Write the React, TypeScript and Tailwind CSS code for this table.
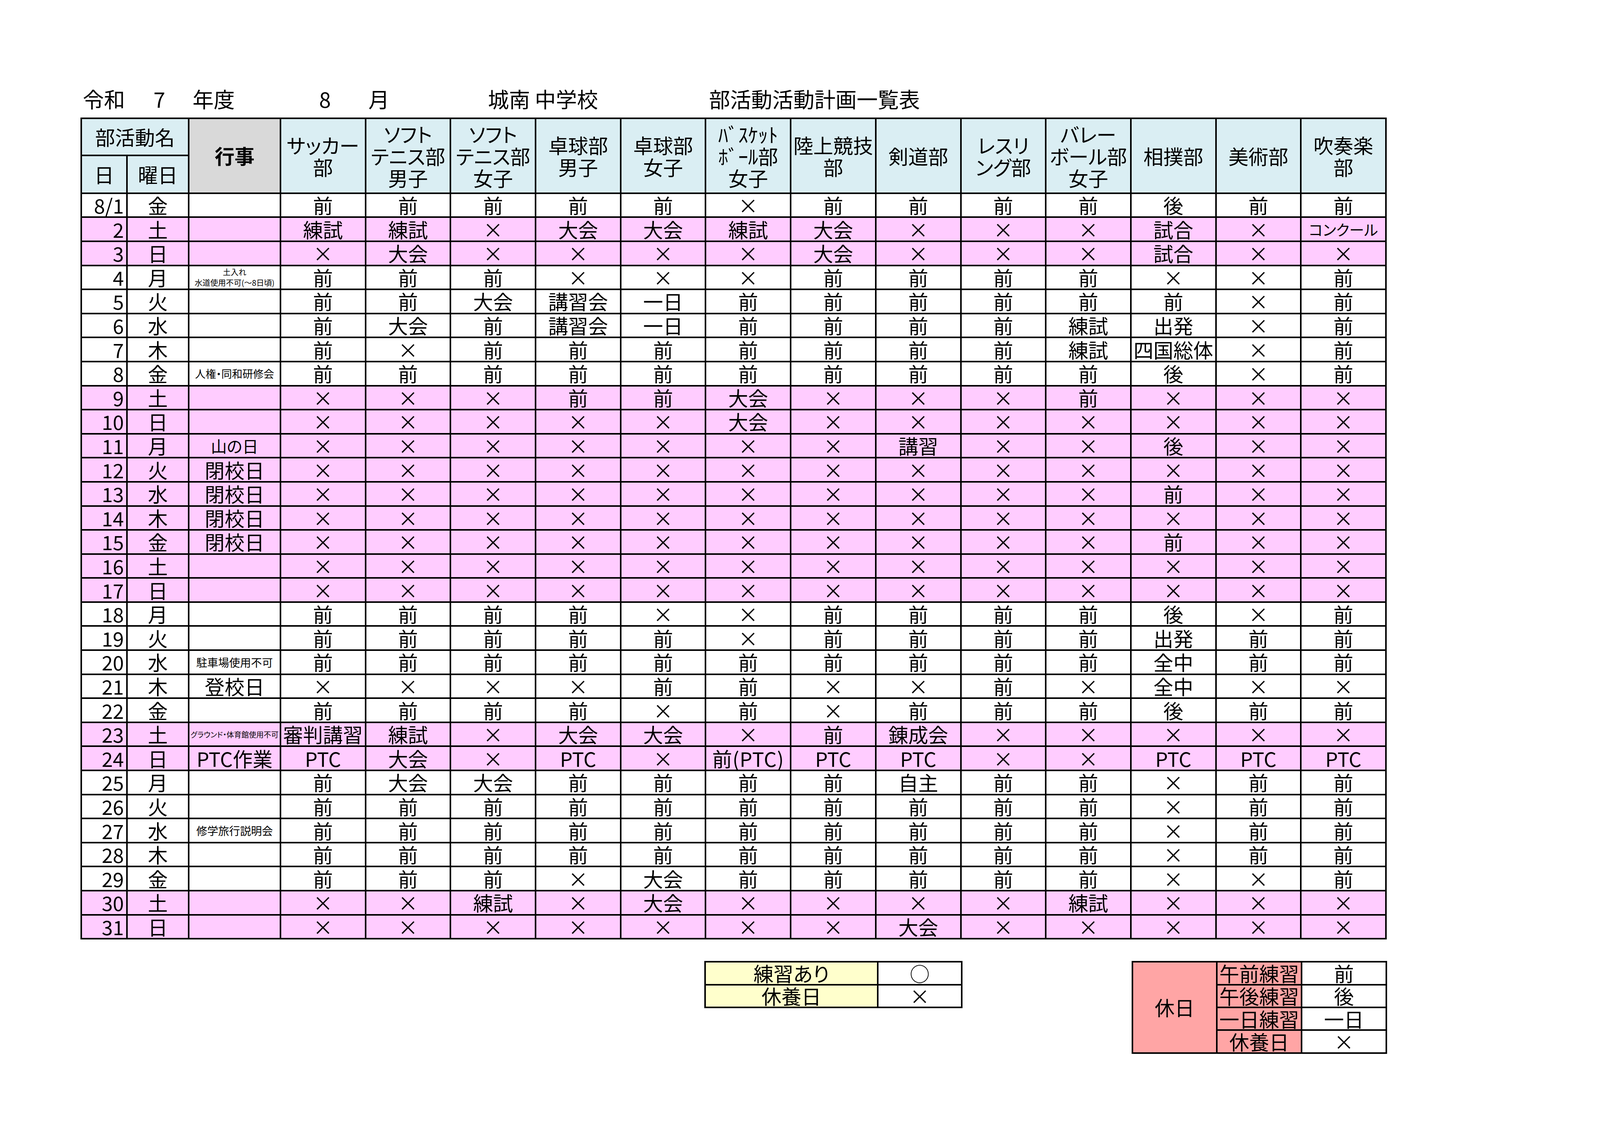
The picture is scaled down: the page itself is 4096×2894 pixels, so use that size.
import React from "react";

/*
  部活動活動計画一覧表 (8月)

  Spreadsheet-style monthly plan. The grid is drawn with a black background and
  4px gaps, so every cell line comes out the same weight.
*/

const clubs: string[][] = [
  ["サッカー", "部"],
  ["ソフト", "テニス部", "男子"],
  ["ソフト", "テニス部", "女子"],
  ["卓球部", "男子"],
  ["卓球部", "女子"],
  ["ﾊﾞｽｹｯﾄ", "ﾎﾞｰﾙ部", "女子"],
  ["陸上競技", "部"],
  ["剣道部"],
  ["レスリ", "ング部"],
  ["バレー", "ボール部", "女子"],
  ["相撲部"],
  ["美術部"],
  ["吹奏楽", "部"],
];

type Row = {
  d: string;
  w: string;
  pink?: boolean;
  ev?: React.ReactNode;
  v: string;
};

const ALL_X = "× × × × × × × × × × × × ×";
const ALL_MAE = "前 前 前 前 前 前 前 前 前 前 × 前 前";

const rows: Row[] = [
  { d: "8/1", w: "金", v: "前 前 前 前 前 × 前 前 前 前 後 前 前" },
  { d: "2", w: "土", pink: true, v: "練試 練試 × 大会 大会 練試 大会 × × × 試合 × コンクール" },
  { d: "3", w: "日", pink: true, v: "× 大会 × × × × 大会 × × × 試合 × ×" },
  {
    d: "4",
    w: "月",
    ev: (
      <div className="flex flex-col items-center text-[20px] leading-[27px]">
        <span>土入れ</span>
        <span>水道使用不可(～8日頃)</span>
      </div>
    ),
    v: "前 前 前 × × × 前 前 前 前 × × 前",
  },
  { d: "5", w: "火", v: "前 前 大会 講習会 一日 前 前 前 前 前 前 × 前" },
  { d: "6", w: "水", v: "前 大会 前 講習会 一日 前 前 前 前 練試 出発 × 前" },
  { d: "7", w: "木", v: "前 × 前 前 前 前 前 前 前 練試 四国総体 × 前" },
  {
    d: "8",
    w: "金",
    ev: <span className="text-[27px]">人権・同和研修会</span>,
    v: "前 前 前 前 前 前 前 前 前 前 後 × 前",
  },
  { d: "9", w: "土", pink: true, v: "× × × 前 前 大会 × × × 前 × × ×" },
  { d: "10", w: "日", pink: true, v: "× × × × × 大会 × × × × × × ×" },
  {
    d: "11",
    w: "月",
    pink: true,
    ev: <span className="text-[41px]">山の日</span>,
    v: "× × × × × × × 講習 × × 後 × ×",
  },
  { d: "12", w: "火", pink: true, ev: "閉校日", v: ALL_X },
  { d: "13", w: "水", pink: true, ev: "閉校日", v: "× × × × × × × × × × 前 × ×" },
  { d: "14", w: "木", pink: true, ev: "閉校日", v: ALL_X },
  { d: "15", w: "金", pink: true, ev: "閉校日", v: "× × × × × × × × × × 前 × ×" },
  { d: "16", w: "土", pink: true, v: ALL_X },
  { d: "17", w: "日", pink: true, v: ALL_X },
  { d: "18", w: "月", v: "前 前 前 前 × × 前 前 前 前 後 × 前" },
  { d: "19", w: "火", v: "前 前 前 前 前 × 前 前 前 前 出発 前 前" },
  {
    d: "20",
    w: "水",
    ev: <span className="text-[28px]">駐車場使用不可</span>,
    v: "前 前 前 前 前 前 前 前 前 前 全中 前 前",
  },
  { d: "21", w: "木", ev: "登校日", v: "× × × × 前 前 × × 前 × 全中 × ×" },
  { d: "22", w: "金", v: "前 前 前 前 × 前 × 前 前 前 後 前 前" },
  {
    d: "23",
    w: "土",
    pink: true,
    ev: <span className="text-[19px]">グラウンド・体育館使用不可</span>,
    v: "審判講習 練試 × 大会 大会 × 前 錬成会 × × × × ×",
  },
  {
    d: "24",
    w: "日",
    pink: true,
    ev: "PTC作業",
    v: "PTC 大会 × PTC × 前(PTC) PTC PTC × × PTC PTC PTC",
  },
  { d: "25", w: "月", v: "前 大会 大会 前 前 前 前 自主 前 前 × 前 前" },
  { d: "26", w: "火", v: ALL_MAE },
  {
    d: "27",
    w: "水",
    ev: <span className="text-[28px]">修学旅行説明会</span>,
    v: ALL_MAE,
  },
  { d: "28", w: "木", v: ALL_MAE },
  { d: "29", w: "金", v: "前 前 前 × 大会 前 前 前 前 前 × × 前" },
  { d: "30", w: "土", pink: true, v: "× × 練試 × 大会 × × × × 練試 × × ×" },
  { d: "31", w: "日", pink: true, v: "× × × × × × × 大会 × × × × ×" },
];

function valueClass(value: string) {
  if (value === "コンクール") return "text-[38px]";
  if (value === "前(PTC)") return "tracking-[0.02em]";
  return "";
}

export default function App() {
  return (
    <main className="min-h-screen bg-white pl-[206px] pt-[226px] text-black font-['Noto_Sans_CJK_JP','Noto_Sans',sans-serif] [font-feature-settings:'palt']">
      {/* title line, laid out like the sheet's cells */}
      <div className="flex h-[54px] items-start pl-[6px] text-[54px] leading-none">
        <span className="w-[181px]">令和</span>
        <span className="w-[100px]">7</span>
        <span className="w-[324px]">年度</span>
        <span className="w-[126px]">8</span>
        <span className="w-[306px]">月</span>
        <span className="w-[566px]">城南 中学校</span>
        <span>部活動活動計画一覧表</span>
      </div>

      {/* main plan table */}
      <div className="mt-[21px] grid w-max grid-cols-[113px_154px_231px_repeat(13,213.7px)] grid-rows-[90.6px_93.2px_repeat(31,57.6px)] gap-[4px] border-[4px] border-black bg-black text-[51px] leading-none">
        <div className="col-span-2 flex items-center justify-center bg-[#daeef3]">部活動名</div>
        <div className="row-span-2 flex items-center justify-center bg-[#d9d9d9] font-bold">行事</div>
        {clubs.map((lines, i) => (
          <div
            key={i}
            className={`row-span-2 flex flex-col items-center justify-center bg-[#daeef3] leading-[56px] ${
              i === 5 ? "[font-feature-settings:normal]" : ""
            }`}
          >
            {lines.map((line) => (
              <span key={line}>{line}</span>
            ))}
          </div>
        ))}
        <div className="flex items-center justify-center bg-[#daeef3]">日</div>
        <div className="flex items-center justify-center bg-[#daeef3]">曜日</div>

        {rows.map((row) => {
          const bg = row.pink ? "bg-[#ffccff]" : "bg-white";
          return (
            <React.Fragment key={row.d}>
              <div className={`flex items-center justify-end pr-[6px] ${bg}`}>{row.d}</div>
              <div className={`flex items-center justify-center ${bg}`}>{row.w}</div>
              <div className={`flex items-center justify-center whitespace-nowrap ${bg}`}>{row.ev}</div>
              {row.v.split(" ").map((value, i) => (
                <div
                  key={i}
                  className={`flex items-center justify-center whitespace-nowrap ${bg} ${valueClass(value)}`}
                >
                  {value}
                </div>
              ))}
            </React.Fragment>
          );
        })}
      </div>

      {/* legends */}
      <div className="mt-[55px] flex items-start text-[51px] leading-none">
        <div className="ml-[1597px] grid grid-cols-[438px_211px] grid-rows-[54.4px_54.4px] gap-[4px] border-[4px] border-black bg-black">
          <div className="flex items-center justify-center bg-[#ffffcc]">練習あり</div>
          <div className="flex items-center justify-center bg-white">○</div>
          <div className="flex items-center justify-center bg-[#ffffcc]">休養日</div>
          <div className="flex items-center justify-center bg-white">×</div>
        </div>

        <div className="ml-[433px] grid grid-cols-[212px_213px_213px] grid-rows-[repeat(4,54.4px)] gap-[4px] border-[4px] border-black bg-black">
          <div className="row-span-4 flex items-center justify-center bg-[#ffa5a5]">休日</div>
          <div className="flex items-center justify-center bg-[#ffa5a5]">午前練習</div>
          <div className="flex items-center justify-center bg-white">前</div>
          <div className="flex items-center justify-center bg-[#ffa5a5]">午後練習</div>
          <div className="flex items-center justify-center bg-white">後</div>
          <div className="flex items-center justify-center bg-[#ffa5a5]">一日練習</div>
          <div className="flex items-center justify-center bg-white">一日</div>
          <div className="flex items-center justify-center bg-[#ffa5a5]">休養日</div>
          <div className="flex items-center justify-center bg-white">×</div>
        </div>
      </div>
    </main>
  );
}
